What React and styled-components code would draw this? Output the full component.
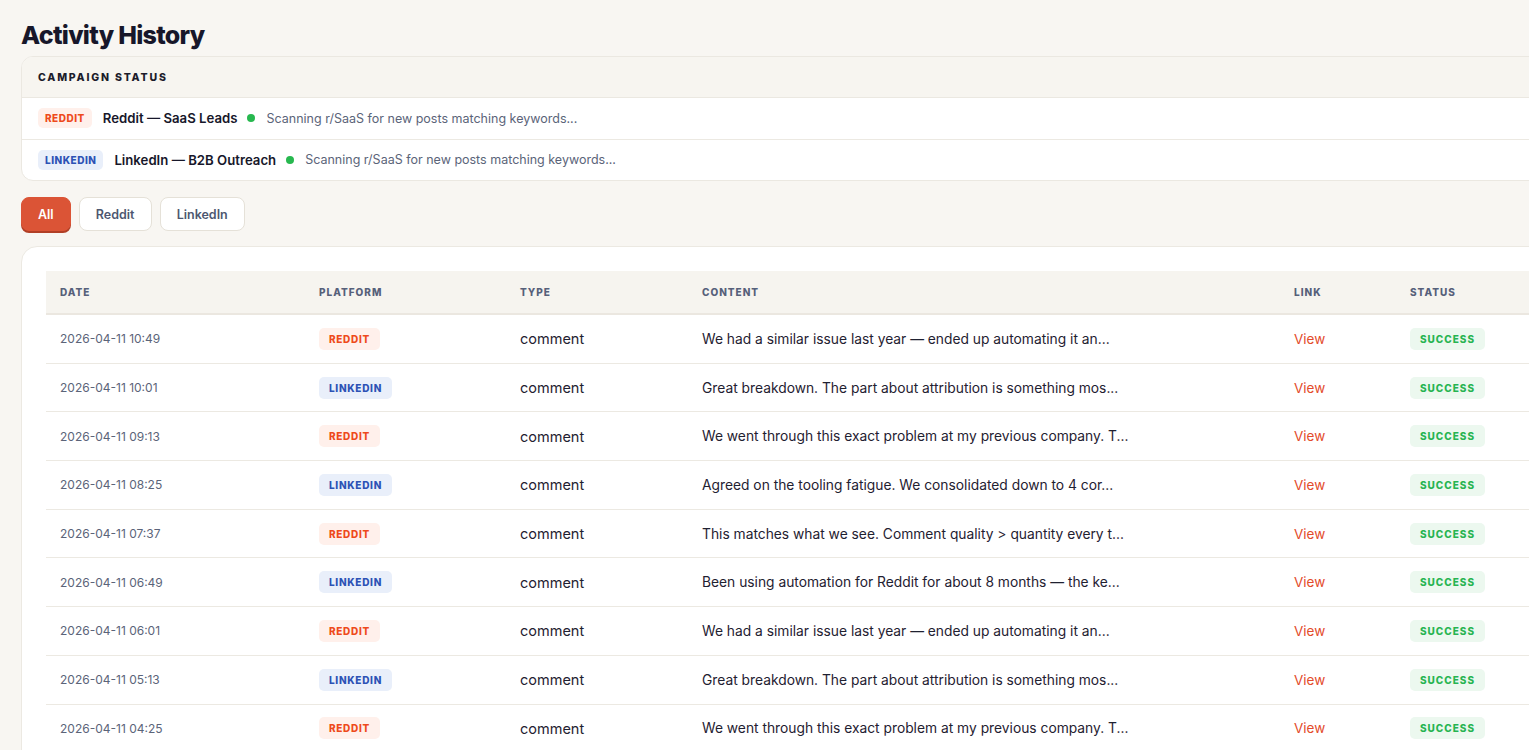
import styled, { createGlobalStyle } from 'styled-components';

const GlobalStyle = createGlobalStyle`
    html, body {
        margin: 0;
        padding: 0;
        background: #f8f6f2;
        overflow-x: hidden;
    }
    body {
        font-family: Inter, "Open Sans", sans-serif;
        color: #1c1c2b;
    }
`;

const Page = styled.main`
    width: 1560px;
    padding: 19px 0 40px 21px;
    display: flex;
    flex-direction: column;
`;

const Title = styled.h1`
    margin: 0 0 5px;
    font-size: 25px;
    line-height: 32px;
    font-weight: 800;
    letter-spacing: -0.7px;
    color: #17172a;
`;

const StatusCard = styled.section`
    background: #ffffff;
    border: 1px solid #ebe8e1;
    border-radius: 12px;
    overflow: hidden;
`;

const StatusHeader = styled.div`
    height: 40px;
    display: flex;
    align-items: center;
    padding-left: 16px;
    background: #f7f5f0;
    border-bottom: 1px solid #ebe8e1;
    font-size: 10.5px;
    font-weight: 800;
    letter-spacing: 1.8px;
    color: #1c1c2b;
`;

const StatusRow = styled.div`
    height: 40.5px;
    display: flex;
    align-items: center;
    padding-left: 16px;
    border-top: ${({ $first }) => ($first ? 'none' : '1px solid #ece9e2')};
`;

const Badge = styled.span`
    display: inline-flex;
    align-items: center;
    height: ${({ $h }) => $h || 20}px;
    padding: 0 ${({ $px }) => $px || 8}px;
    border-radius: 5px;
    font-size: 10px;
    font-weight: 800;
    letter-spacing: ${({ $ls }) => $ls ?? 0.7}px;
    background: ${({ $tone }) =>
        $tone === 'reddit' ? '#fff0eb' : $tone === 'linkedin' ? '#e9effa' : '#ecf8ef'};
    color: ${({ $tone }) =>
        $tone === 'reddit' ? '#ee4a1c' : $tone === 'linkedin' ? '#2d52b5' : '#27b451'};
`;

const CampaignName = styled.span`
    margin-left: 11px;
    font-size: 13.2px;
    font-weight: 600;
    color: #17172a;
`;

const Dot = styled.span`
    width: 8px;
    height: 8px;
    border-radius: 50%;
    background: #27b84f;
    margin: 0 11px 0 10px;
`;

const StatusText = styled.span`
    font-size: 12.5px;
    color: #5b6479;
`;

const Filters = styled.div`
    display: flex;
    gap: 8px;
    margin: 16px 0 15px;
`;

const FilterButton = styled.button`
    height: 34px;
    padding: 0 16px;
    border-radius: 8px;
    font-family: inherit;
    font-size: 12.5px;
    font-weight: 600;
    cursor: pointer;
    border: 1px solid ${({ $active }) => ($active ? '#db5436' : '#e5e1d8')};
    background: ${({ $active }) => ($active ? '#db5436' : '#ffffff')};
    color: ${({ $active }) => ($active ? '#ffffff' : '#4d5770')};
    box-shadow: ${({ $active }) => ($active ? '0 2px 0 #b13f26' : 'none')};
    min-width: ${({ $w }) => $w}px;
`;

const TableCard = styled.section`
    background: #ffffff;
    border: 1px solid #ece9e2;
    border-radius: 16px;
    padding: 24px;
`;

const Table = styled.table`
    width: 100%;
    border-collapse: collapse;
`;

const Th = styled.th`
    width: ${({ $w }) => ($w ? `${$w}px` : 'auto')};
    height: 42px;
    padding: 0 0 0 14px;
    text-align: left;
    background: #f6f4ef;
    border-bottom: 2px solid #ebe7e0;
    font-size: 10px;
    font-weight: 800;
    letter-spacing: 1px;
    color: #56607a;
`;

const Td = styled.td`
    height: 47.7px;
    padding: 0 0 0 14px;
    border-bottom: 1px solid #ece9e2;
    font-size: ${({ $size }) => $size || 13}px;
    color: ${({ $muted }) => ($muted ? '#5b6479' : '#1f2131')};
    white-space: nowrap;
`;

const ViewLink = styled.a`
    color: #e34b2b;
    text-decoration: none;
    font-size: 13.5px;
    cursor: pointer;
`;

const campaigns = [
    { tone: 'reddit', label: 'REDDIT', name: 'Reddit — SaaS Leads' },
    { tone: 'linkedin', label: 'LINKEDIN', name: 'LinkedIn — B2B Outreach' },
];

const comments = [
    'We had a similar issue last year — ended up automating it an...',
    'Great breakdown. The part about attribution is something mos...',
    'We went through this exact problem at my previous company. T...',
    'Agreed on the tooling fatigue. We consolidated down to 4 cor...',
    'This matches what we see. Comment quality > quantity every t...',
    'Been using automation for Reddit for about 8 months — the ke...',
];

const times = ['10:49', '10:01', '09:13', '08:25', '07:37', '06:49', '06:01', '05:13', '04:25', '03:37', '02:49'];

const rows = times.map((t, i) => ({
    date: `2026-04-11 ${t}`,
    platform: i % 2 === 0 ? 'reddit' : 'linkedin',
    content: comments[i % comments.length],
}));

export default function App() {
    return (
        <>
            <GlobalStyle />
            <Page>
                <Title>Activity History</Title>

                <StatusCard>
                    <StatusHeader>CAMPAIGN STATUS</StatusHeader>
                    {campaigns.map((c, i) => (
                        <StatusRow key={c.name} $first={i === 0}>
                            <Badge $tone={c.tone} $px={7} $ls={0.5}>{c.label}</Badge>
                            <CampaignName>{c.name}</CampaignName>
                            <Dot />
                            <StatusText>Scanning r/SaaS for new posts matching keywords...</StatusText>
                        </StatusRow>
                    ))}
                </StatusCard>

                <Filters>
                    <FilterButton $active $w={49}>All</FilterButton>
                    <FilterButton $w={73}>Reddit</FilterButton>
                    <FilterButton $w={84}>LinkedIn</FilterButton>
                </Filters>

                <TableCard>
                    <Table>
                        <thead>
                            <tr>
                                <Th $w={245}>DATE</Th>
                                <Th $w={187}>PLATFORM</Th>
                                <Th $w={168}>TYPE</Th>
                                <Th $w={578}>CONTENT</Th>
                                <Th $w={102}>LINK</Th>
                                <Th>STATUS</Th>
                            </tr>
                        </thead>
                        <tbody>
                            {rows.map((r) => (
                                <tr key={r.date}>
                                    <Td $size={12} $muted>{r.date}</Td>
                                    <Td>
                                        <Badge $tone={r.platform} $h={22} $px={10}>
                                            {r.platform === 'reddit' ? 'REDDIT' : 'LINKEDIN'}
                                        </Badge>
                                    </Td>
                                    <Td $size={14.5}>comment</Td>
                                    <Td $size={13.8}>{r.content}</Td>
                                    <Td><ViewLink>View</ViewLink></Td>
                                    <Td>
                                        <Badge $tone="success" $h={22} $px={10} $ls={1}>SUCCESS</Badge>
                                    </Td>
                                </tr>
                            ))}
                        </tbody>
                    </Table>
                </TableCard>
            </Page>
        </>
    );
}
